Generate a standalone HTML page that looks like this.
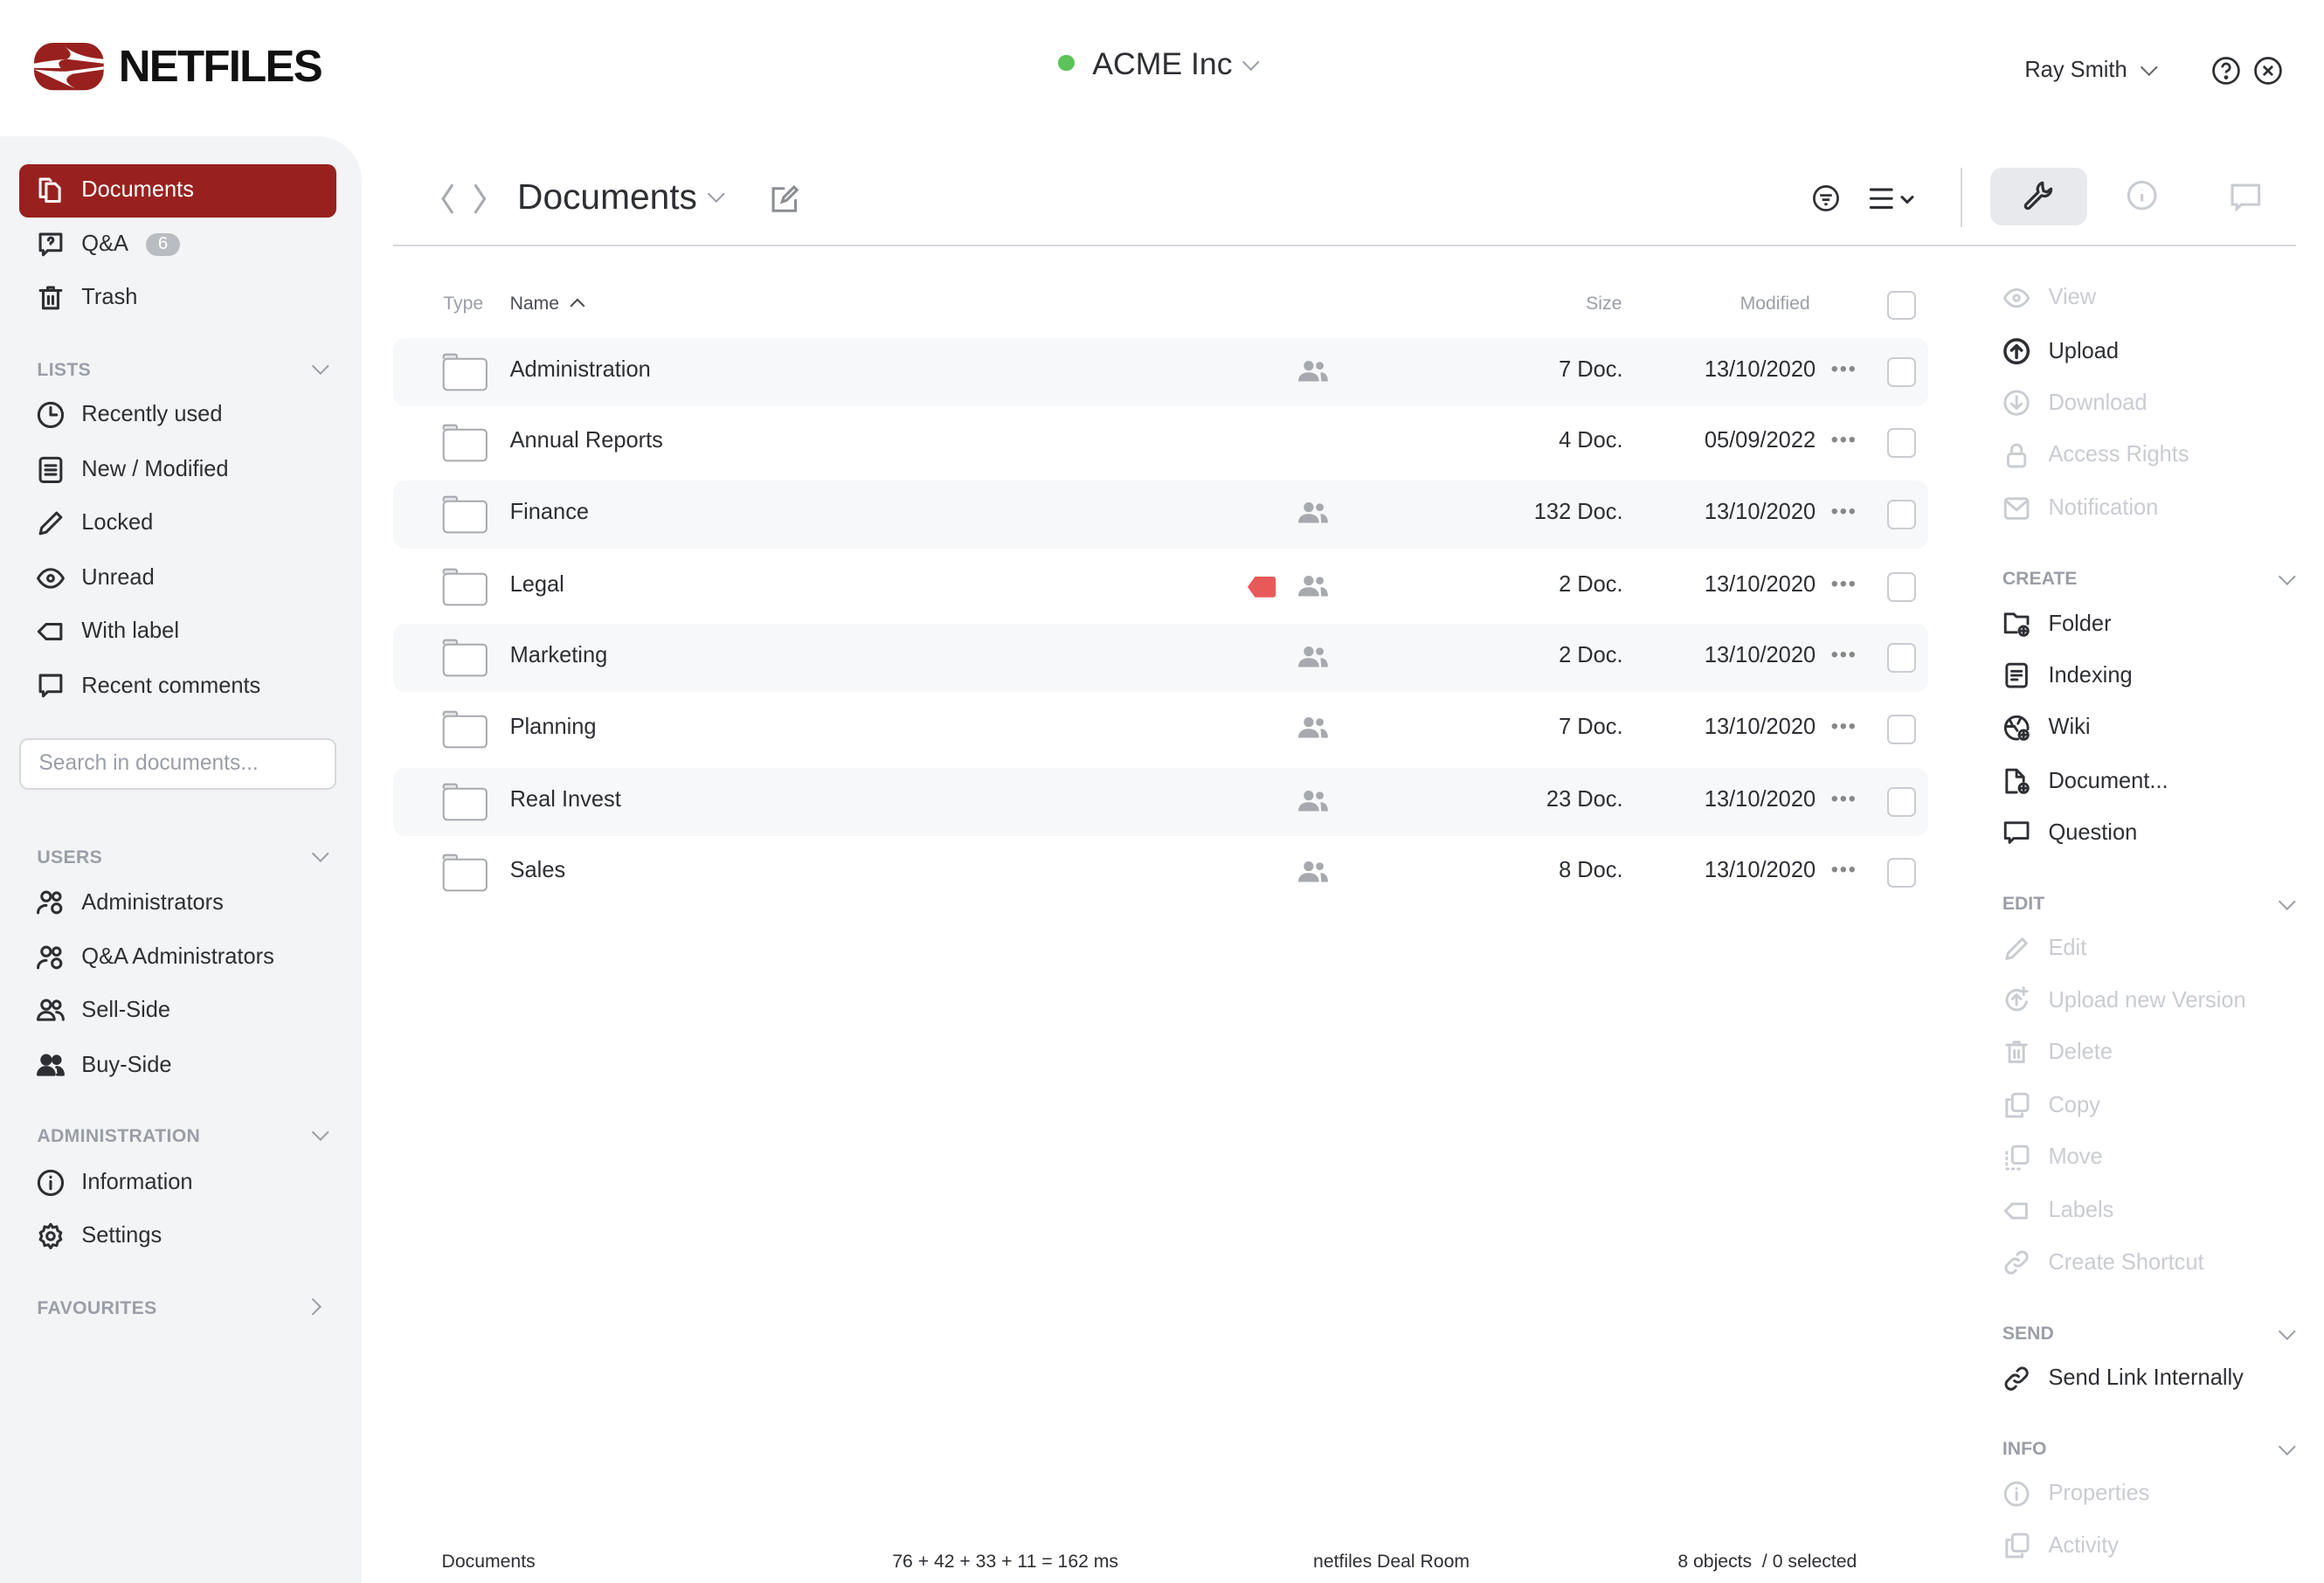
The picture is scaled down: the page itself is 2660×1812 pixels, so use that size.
<!DOCTYPE html>
<html><head><meta charset="utf-8"><style>
*{margin:0;padding:0;box-sizing:border-box}
html,body{width:2660px;height:1812px;overflow:hidden;background:#fff}
#r{zoom:1.69643;width:1568px;height:1068px;position:relative;font-family:"Liberation Sans",sans-serif;color:#2d2f33}
.a{position:absolute;white-space:nowrap}
.side{position:absolute;left:0;top:92px;width:244px;height:976px;background:#f3f4f6;border-top-right-radius:30px}
.si{position:absolute;left:24px;font-size:15px;display:flex;align-items:center;height:20px}
.si svg{width:20px;height:20px;margin-right:11px;fill:none;stroke:#2d2f33;stroke-width:1.8;stroke-linecap:round;stroke-linejoin:round}
.hd{position:absolute;left:25px;font-size:12.5px;color:#9a9ea6;font-weight:bold;letter-spacing:.2px}
.chev{position:absolute;width:8px;height:8px;border-right:1.5px solid #9a9ea6;border-bottom:1.5px solid #9a9ea6;transform:rotate(45deg)}
.row{position:absolute;left:265px;width:1036px;height:46px;border-radius:8px}
.row.g{background:#f7f8f9}
.fold{position:absolute;left:33px;top:10px;width:31px;height:26px}
.nm{position:absolute;left:79px;top:13px;font-size:15px}
.sz{position:absolute;right:206px;top:13px;font-size:15px}
.dt{position:absolute;right:76px;top:13px;font-size:15px}
.dots{position:absolute;right:48px;top:13px;font-size:14px;color:#888;letter-spacing:1px}
.cb{position:absolute;right:8px;top:13px;width:20px;height:20px;border:1.5px solid #c9ccd1;border-radius:4px;background:#fff}
.ppl{position:absolute;left:611px;top:14px}
.ri{position:absolute;left:1351px;font-size:15px;display:flex;align-items:center;height:20px}
.ri svg{width:19px;height:19px;margin-right:12px;fill:none;stroke-width:1.8;stroke-linecap:round;stroke-linejoin:round}
.ri.d{color:#c9ccd1}.ri.d svg{stroke:#c9ccd1}
.ri.k svg{stroke:#2d2f33}
.rh{position:absolute;left:1351px;font-size:12.5px;color:#9a9ea6;font-weight:bold}
.ft{position:absolute;top:1047px;font-size:12.5px}
</style></head><body><div id="r">
<!-- logo -->
<svg class="a" style="left:23px;top:29px" width="48" height="33" viewBox="0 0 48 33"><rect x="0" y="0" width="47" height="32" rx="13" fill="#98211f"/><path d="M0 17 L18 17 Q14 12 22 11 L47 14 L47 11 Q30 10 20 2 Q28 8 22 11 Q10 12 0 14Z" fill="#fff"/><path d="M0 18 L28 31 Q17 25 26 21 L47 18 L47 16 L24 19 Q20 20 0 18Z" fill="#fff"/></svg>
<div class="a" style="left:80px;top:27px;font-size:30px;font-weight:bold;letter-spacing:-1px;color:#111">NETFILES</div>
<div class="a" style="left:714px;top:37px;width:11px;height:11px;border-radius:50%;background:#5cc25a"></div>
<div class="a" style="left:737px;top:31px;font-size:21px">ACME Inc</div>
<div class="chev" style="left:840px;top:38px"></div>
<div class="a" style="left:1366px;top:39px;font-size:15px">Ray Smith</div>
<div class="chev" style="left:1446px;top:41px;border-color:#666"></div>
<svg class="a" style="left:1492px;top:38px" width="20" height="20" viewBox="0 0 20 20" fill="none" stroke="#2d2f33" stroke-width="1.6"><circle cx="10" cy="10" r="8.5"/><path d="M7.5 7.8a2.5 2.5 0 1 1 3.3 2.3c-.6.3-.8.7-.8 1.4"/><circle cx="10" cy="14.5" r=".6" fill="#2d2f33"/></svg>
<svg class="a" style="left:1520px;top:38px" width="20" height="20" viewBox="0 0 20 20" fill="none" stroke="#2d2f33" stroke-width="1.6"><circle cx="10" cy="10" r="8.5"/><path d="M7 7l6 6M13 7l-6 6"/></svg>

<div class="side"></div>
<div class="a" style="left:13px;top:111px;width:214px;height:36px;border-radius:6px;background:#98211f"></div>
<div class="si" style="top:118px;color:#fff"><svg viewBox="0 0 20 20" style="stroke:#fff"><path d="M6 15H3V3h6l1 1"/><path d="M7 6h6l3 3v9H7z"/></svg>Documents</div>
<div class="si" style="top:155px"><svg viewBox="0 0 20 20"><path d="M3 3h14v11H8l-3 3v-3H3z"/><path d="M8.5 7a1.6 1.6 0 1 1 2 1.5c-.4.2-.5.5-.5 1"/></svg>Q&amp;A<span style="margin-left:12px;background:#b9bcc1;color:#fff;font-size:12px;border-radius:9px;padding:1px 8px">6</span></div>
<div class="si" style="top:191px"><svg viewBox="0 0 20 20"><path d="M3 5h14M8 5V3h4v2M5 5v12h10V5M8.5 9v5M11.5 9v5"/></svg>Trash</div>
<div class="hd" style="top:243px">LISTS</div><div class="chev" style="left:212px;top:243px"></div>
<div class="si" style="top:270px"><svg viewBox="0 0 20 20"><circle cx="10" cy="10" r="8"/><path d="M10 5v5h4"/></svg>Recently used</div>
<div class="si" style="top:307px"><svg viewBox="0 0 20 20"><rect x="3" y="2" width="14" height="16" rx="2"/><path d="M6.5 7h7M6.5 10h7M6.5 13h7"/></svg>New / Modified</div>
<div class="si" style="top:343px"><svg viewBox="0 0 20 20"><path d="M3 17l1-4L14 3l3 3L7 16z"/></svg>Locked</div>
<div class="si" style="top:380px"><svg viewBox="0 0 20 20"><path d="M1.5 10s3-6 8.5-6 8.5 6 8.5 6-3 6-8.5 6-8.5-6-8.5-6z"/><circle cx="10" cy="10" r="2"/></svg>Unread</div>
<div class="si" style="top:416px"><svg viewBox="0 0 20 20"><path d="M7 5h10v10H7l-5-5z"/></svg>With label</div>
<div class="si" style="top:453px"><svg viewBox="0 0 20 20"><path d="M3 3h14v11H8l-3 3v-3H3z"/></svg>Recent comments</div>
<div class="a" style="left:13px;top:498px;width:214px;height:35px;border:1.5px solid #d6d8dc;border-radius:6px;background:#fff;font-size:14.5px;color:#9a9ea6;padding:8px 12px">Search in documents...</div>
<div class="hd" style="top:572px">USERS</div><div class="chev" style="left:212px;top:572px"></div>
<div class="si" style="top:599px"><svg viewBox="0 0 20 20"><circle cx="7" cy="6" r="3"/><path d="M1.5 17c0-3 2.5-5 5.5-5"/><circle cx="14" cy="6" r="2.5"/><circle cx="14" cy="14" r="3"/></svg>Administrators</div>
<div class="si" style="top:636px"><svg viewBox="0 0 20 20"><circle cx="7" cy="6" r="3"/><path d="M1.5 17c0-3 2.5-5 5.5-5"/><circle cx="14" cy="6" r="2.5"/><circle cx="14" cy="14" r="3"/></svg>Q&amp;A Administrators</div>
<div class="si" style="top:672px"><svg viewBox="0 0 20 20"><circle cx="7" cy="6" r="3"/><path d="M1.5 16c0-3 2.5-5 5.5-5s5.5 2 5.5 5z"/><circle cx="14" cy="6" r="2.5"/><path d="M14 11c2.5 0 4.5 2 4.5 5"/></svg>Sell-Side</div>
<div class="si" style="top:709px"><svg viewBox="0 0 20 20" style="fill:#2d2f33"><circle cx="7" cy="6" r="3"/><path d="M1.5 16c0-3 2.5-5 5.5-5s5.5 2 5.5 5z"/><circle cx="14" cy="6" r="2.5"/><path d="M14 11c2.5 0 4.5 2 4.5 5h-4"/></svg>Buy-Side</div>
<div class="hd" style="top:760px">ADMINISTRATION</div><div class="chev" style="left:212px;top:760px"></div>
<div class="si" style="top:788px"><svg viewBox="0 0 20 20"><circle cx="10" cy="10" r="8"/><path d="M10 9v5M10 6v.3"/></svg>Information</div>
<div class="si" style="top:824px"><svg viewBox="0 0 20 20"><circle cx="10" cy="10" r="2.5"/><path d="M10 2l1.5 2.2 2.6-.6.6 2.6L17 7.7l-1 2.3 1 2.3-2.3 1.5-.6 2.6-2.6-.6L10 18l-1.5-2.2-2.6.6-.6-2.6L3 12.3 4 10 3 7.7l2.3-1.5.6-2.6 2.6.6z"/></svg>Settings</div>
<div class="hd" style="top:876px">FAVOURITES</div><div class="chev" style="left:207px;top:878px;transform:rotate(-45deg)"></div>

<!-- main header -->
<svg class="a" style="left:296px;top:123px" width="40" height="22" viewBox="0 0 40 22" fill="none" stroke="#a6a9ae" stroke-width="1.8" stroke-linecap="round"><path d="M9 2L3 11l6 9M25 2l6 9-6 9"/></svg>
<div class="a" style="left:349px;top:119px;font-size:24px;color:#2d2f33">Documents</div>
<div class="chev" style="left:479px;top:127px"></div>
<svg class="a" style="left:519px;top:123px" width="22" height="22" viewBox="0 0 22 22" fill="none" stroke="#8a8d92" stroke-width="1.8" stroke-linecap="round"><path d="M10 4H3v15h15v-7"/><path d="M9 13l1-3 7-7 2 2-7 7z"/></svg>
<svg class="a" style="left:1222px;top:124px" width="20" height="20" viewBox="0 0 20 20" fill="none" stroke="#2d2f33" stroke-width="1.6"><circle cx="10" cy="10" r="8"/><path d="M6 8h8M7.5 11h5M9 14h2"/></svg>
<svg class="a" style="left:1260px;top:125px" width="34" height="18" viewBox="0 0 34 18" fill="none" stroke="#2d2f33" stroke-width="1.8" stroke-linecap="round"><path d="M2 3h14M2 9h14M2 15h14M23 8l3.5 3.5L30 8"/></svg>
<div class="a" style="left:1323px;top:113px;width:1px;height:40px;background:#d6d8dc"></div>
<div class="a" style="left:1343px;top:113px;width:65px;height:39px;border-radius:8px;background:#e8e9ec"></div>
<svg class="a" style="left:1364px;top:121px" width="22" height="22" viewBox="0 0 22 22" fill="none" stroke="#2d2f33" stroke-width="1.9" stroke-linecap="round" stroke-linejoin="round"><path d="M14 2.5a4.5 4.5 0 0 0-2.8 6.3L3 17a1.6 1.6 0 0 0 2.3 2.3l8.2-8.2a4.5 4.5 0 0 0 6.3-4.5l-2.7 2.1-2.3-.6-.6-2.3z"/></svg>
<svg class="a" style="left:1434px;top:121px" width="22" height="22" viewBox="0 0 22 22" fill="none" stroke="#c9ccd1" stroke-width="1.8"><circle cx="11" cy="11" r="9"/><path d="M11 10v5M11 7v.3"/></svg>
<svg class="a" style="left:1503px;top:122px" width="24" height="22" viewBox="0 0 24 22" fill="none" stroke="#c9ccd1" stroke-width="1.8"><path d="M3 3h18v13H9l-3 3v-3H3z"/></svg>
<div class="a" style="left:265px;top:165px;width:1284px;height:1.5px;background:#d6d8dc"></div>

<!-- table -->
<div class="a" style="left:299px;top:198px;font-size:12.5px;color:#9a9ea6">Type</div>
<div class="a" style="left:344px;top:198px;font-size:12.5px;color:#4a4d52">Name</div>
<div class="a" style="left:386px;top:203px;width:7px;height:7px;border-left:1.5px solid #4a4d52;border-top:1.5px solid #4a4d52;transform:rotate(45deg)"></div>
<div class="a" style="left:1070px;top:198px;font-size:12.5px;color:#9a9ea6">Size</div>
<div class="a" style="left:1174px;top:198px;font-size:12.5px;color:#9a9ea6">Modified</div>
<div class="a" style="left:1273px;top:196px;width:20px;height:20px;border:1.5px solid #c9ccd1;border-radius:4px"></div>

<div class="row g" style="top:228px"><svg class="fold" viewBox="0 0 31 26" fill="#fff" stroke="#a6a9ae" stroke-width="1.2"><path d="M1 4V2.5Q1 1 2.5 1h6Q10 1 10 2.5V4" fill="#e5e6e8"/><rect x="1" y="4" width="29" height="21" rx="2.5"/></svg><div class="nm">Administration</div><svg class="ppl" width="20" height="16" viewBox="0 0 20 16" fill="#a6a9ae"><circle cx="7" cy="4.5" r="3.3"/><path d="M0 15c0-4 3-6 7-6s7 2 7 6z"/><circle cx="14.5" cy="4.5" r="2.6"/><path d="M15 9c3 0 5 2 5 6h-4.5z"/></svg><div class="sz">7 Doc.</div><div class="dt">13/10/2020</div><div class="dots">•••</div><div class="cb"></div></div>
<div class="row" style="top:276px"><svg class="fold" viewBox="0 0 31 26" fill="#fff" stroke="#a6a9ae" stroke-width="1.2"><path d="M1 4V2.5Q1 1 2.5 1h6Q10 1 10 2.5V4" fill="#e5e6e8"/><rect x="1" y="4" width="29" height="21" rx="2.5"/></svg><div class="nm">Annual Reports</div><div class="sz">4 Doc.</div><div class="dt">05/09/2022</div><div class="dots">•••</div><div class="cb"></div></div>
<div class="row g" style="top:324px"><svg class="fold" viewBox="0 0 31 26" fill="#fff" stroke="#a6a9ae" stroke-width="1.2"><path d="M1 4V2.5Q1 1 2.5 1h6Q10 1 10 2.5V4" fill="#e5e6e8"/><rect x="1" y="4" width="29" height="21" rx="2.5"/></svg><div class="nm">Finance</div><svg class="ppl" width="20" height="16" viewBox="0 0 20 16" fill="#a6a9ae"><circle cx="7" cy="4.5" r="3.3"/><path d="M0 15c0-4 3-6 7-6s7 2 7 6z"/><circle cx="14.5" cy="4.5" r="2.6"/><path d="M15 9c3 0 5 2 5 6h-4.5z"/></svg><div class="sz">132 Doc.</div><div class="dt">13/10/2020</div><div class="dots">•••</div><div class="cb"></div></div>
<div class="row" style="top:373px"><svg class="fold" viewBox="0 0 31 26" fill="#fff" stroke="#a6a9ae" stroke-width="1.2"><path d="M1 4V2.5Q1 1 2.5 1h6Q10 1 10 2.5V4" fill="#e5e6e8"/><rect x="1" y="4" width="29" height="21" rx="2.5"/></svg><div class="nm">Legal</div><svg class="a" style="left:577px;top:16px" width="19" height="14" viewBox="0 0 19 14"><path d="M5 0h12q2 0 2 2v10q0 2-2 2H5L0 7z" fill="#e8595a"/></svg><svg class="ppl" width="20" height="16" viewBox="0 0 20 16" fill="#a6a9ae"><circle cx="7" cy="4.5" r="3.3"/><path d="M0 15c0-4 3-6 7-6s7 2 7 6z"/><circle cx="14.5" cy="4.5" r="2.6"/><path d="M15 9c3 0 5 2 5 6h-4.5z"/></svg><div class="sz">2 Doc.</div><div class="dt">13/10/2020</div><div class="dots">•••</div><div class="cb"></div></div>
<div class="row g" style="top:421px"><svg class="fold" viewBox="0 0 31 26" fill="#fff" stroke="#a6a9ae" stroke-width="1.2"><path d="M1 4V2.5Q1 1 2.5 1h6Q10 1 10 2.5V4" fill="#e5e6e8"/><rect x="1" y="4" width="29" height="21" rx="2.5"/></svg><div class="nm">Marketing</div><svg class="ppl" width="20" height="16" viewBox="0 0 20 16" fill="#a6a9ae"><circle cx="7" cy="4.5" r="3.3"/><path d="M0 15c0-4 3-6 7-6s7 2 7 6z"/><circle cx="14.5" cy="4.5" r="2.6"/><path d="M15 9c3 0 5 2 5 6h-4.5z"/></svg><div class="sz">2 Doc.</div><div class="dt">13/10/2020</div><div class="dots">•••</div><div class="cb"></div></div>
<div class="row" style="top:469px"><svg class="fold" viewBox="0 0 31 26" fill="#fff" stroke="#a6a9ae" stroke-width="1.2"><path d="M1 4V2.5Q1 1 2.5 1h6Q10 1 10 2.5V4" fill="#e5e6e8"/><rect x="1" y="4" width="29" height="21" rx="2.5"/></svg><div class="nm">Planning</div><svg class="ppl" width="20" height="16" viewBox="0 0 20 16" fill="#a6a9ae"><circle cx="7" cy="4.5" r="3.3"/><path d="M0 15c0-4 3-6 7-6s7 2 7 6z"/><circle cx="14.5" cy="4.5" r="2.6"/><path d="M15 9c3 0 5 2 5 6h-4.5z"/></svg><div class="sz">7 Doc.</div><div class="dt">13/10/2020</div><div class="dots">•••</div><div class="cb"></div></div>
<div class="row g" style="top:518px"><svg class="fold" viewBox="0 0 31 26" fill="#fff" stroke="#a6a9ae" stroke-width="1.2"><path d="M1 4V2.5Q1 1 2.5 1h6Q10 1 10 2.5V4" fill="#e5e6e8"/><rect x="1" y="4" width="29" height="21" rx="2.5"/></svg><div class="nm">Real Invest</div><svg class="ppl" width="20" height="16" viewBox="0 0 20 16" fill="#a6a9ae"><circle cx="7" cy="4.5" r="3.3"/><path d="M0 15c0-4 3-6 7-6s7 2 7 6z"/><circle cx="14.5" cy="4.5" r="2.6"/><path d="M15 9c3 0 5 2 5 6h-4.5z"/></svg><div class="sz">23 Doc.</div><div class="dt">13/10/2020</div><div class="dots">•••</div><div class="cb"></div></div>
<div class="row" style="top:566px"><svg class="fold" viewBox="0 0 31 26" fill="#fff" stroke="#a6a9ae" stroke-width="1.2"><path d="M1 4V2.5Q1 1 2.5 1h6Q10 1 10 2.5V4" fill="#e5e6e8"/><rect x="1" y="4" width="29" height="21" rx="2.5"/></svg><div class="nm">Sales</div><svg class="ppl" width="20" height="16" viewBox="0 0 20 16" fill="#a6a9ae"><circle cx="7" cy="4.5" r="3.3"/><path d="M0 15c0-4 3-6 7-6s7 2 7 6z"/><circle cx="14.5" cy="4.5" r="2.6"/><path d="M15 9c3 0 5 2 5 6h-4.5z"/></svg><div class="sz">8 Doc.</div><div class="dt">13/10/2020</div><div class="dots">•••</div><div class="cb"></div></div>

<!-- footer -->
<div class="ft" style="left:298px">Documents</div>
<div class="ft" style="left:602px">76 + 42 + 33 + 11 = 162 ms</div>
<div class="ft" style="left:886px">netfiles Deal Room</div>
<div class="ft" style="left:1132px">8 objects &nbsp;/ 0 selected</div>

<!-- right panel -->
<div class="ri d" style="top:191px"><svg viewBox="0 0 20 20"><path d="M1.5 10s3-6 8.5-6 8.5 6 8.5 6-3 6-8.5 6-8.5-6-8.5-6z"/><circle cx="10" cy="10" r="2"/></svg>View</div>
<div class="ri k" style="top:227px"><svg viewBox="0 0 20 20" style="stroke-width:2.2"><circle cx="10" cy="10" r="8.2"/><path d="M10 14.5V6M6.5 9.3L10 6l3.5 3.3"/></svg>Upload</div>
<div class="ri d" style="top:262px"><svg viewBox="0 0 20 20"><circle cx="10" cy="10" r="8.2"/><path d="M10 5.5V14M6.5 10.7L10 14l3.5-3.3"/></svg>Download</div>
<div class="ri d" style="top:297px"><svg viewBox="0 0 20 20"><rect x="4" y="9" width="12" height="9" rx="2"/><path d="M6.5 9V6a3.5 3.5 0 0 1 7 0v3"/></svg>Access Rights</div>
<div class="ri d" style="top:333px"><svg viewBox="0 0 20 20"><rect x="2" y="3" width="16" height="14" rx="2"/><path d="M2.5 4.5L10 11l7.5-6.5"/></svg>Notification</div>
<div class="rh" style="top:384px">CREATE</div><div class="chev" style="left:1539px;top:385px"></div>
<div class="ri k" style="top:411px"><svg viewBox="0 0 20 20"><path d="M10 16H2V3h6l2 2h8v5"/><circle cx="15" cy="15" r="3.2"/><path d="M15 13.5v3M13.5 15h3"/></svg>Folder</div>
<div class="ri k" style="top:446px"><svg viewBox="0 0 20 20"><rect x="3" y="2" width="14" height="16" rx="2"/><path d="M6.5 7h7M6.5 10h7M6.5 13h4"/></svg>Indexing</div>
<div class="ri k" style="top:481px"><svg viewBox="0 0 20 20"><path d="M11 18a8 8 0 1 1 7-7"/><path d="M2.5 9h6l2 3M5 4l2 4M13 3l-2 4"/><circle cx="15" cy="15" r="3.2"/><path d="M15 13.5v3M13.5 15h3"/></svg>Wiki</div>
<div class="ri k" style="top:517px"><svg viewBox="0 0 20 20"><path d="M10 18H3V2h7l5 5v3M10 2v5h5"/><circle cx="15" cy="15" r="3.2"/><path d="M15 13.5v3M13.5 15h3"/></svg>Document...</div>
<div class="ri k" style="top:552px"><svg viewBox="0 0 20 20"><path d="M2 3h16v11H8l-3 3v-3H2z"/></svg>Question</div>
<div class="rh" style="top:603px">EDIT</div><div class="chev" style="left:1539px;top:604px"></div>
<div class="ri d" style="top:630px"><svg viewBox="0 0 20 20"><path d="M3 17l1-4L14 3l3 3L7 16z"/></svg>Edit</div>
<div class="ri d" style="top:665px"><svg viewBox="0 0 20 20"><path d="M17 11a7 7 0 1 1-5-8"/><path d="M10 13V6M7 9l3-3 3 3M15 1v5M12.5 3.5h5"/></svg>Upload new Version</div>
<div class="ri d" style="top:700px"><svg viewBox="0 0 20 20"><path d="M3 5h14M8 5V3h4v2M5 5v12h10V5M8.5 9v5M11.5 9v5"/></svg>Delete</div>
<div class="ri d" style="top:736px"><svg viewBox="0 0 20 20"><rect x="7" y="2" width="11" height="12" rx="2"/><path d="M5 6H3v12h11v-2"/></svg>Copy</div>
<div class="ri d" style="top:771px"><svg viewBox="0 0 20 20"><rect x="7" y="2" width="11" height="12" rx="2"/><path d="M3 6v1M3 10v1M3 14v1M3 18h1M7 18h1M11 18h1" /></svg>Move</div>
<div class="ri d" style="top:807px"><svg viewBox="0 0 20 20"><path d="M7 5h10v10H7l-5-5z"/></svg>Labels</div>
<div class="ri d" style="top:842px"><svg viewBox="0 0 20 20"><path d="M8.5 11.5a3.5 3.5 0 0 0 5 0l3-3a3.5 3.5 0 0 0-5-5l-1 1M11.5 8.5a3.5 3.5 0 0 0-5 0l-3 3a3.5 3.5 0 0 0 5 5l1-1"/></svg>Create Shortcut</div>
<div class="rh" style="top:893px">SEND</div><div class="chev" style="left:1539px;top:894px"></div>
<div class="ri k" style="top:920px"><svg viewBox="0 0 20 20"><path d="M8.5 11.5a3.5 3.5 0 0 0 5 0l3-3a3.5 3.5 0 0 0-5-5l-1 1M11.5 8.5a3.5 3.5 0 0 0-5 0l-3 3a3.5 3.5 0 0 0 5 5l1-1"/></svg>Send Link Internally</div>
<div class="rh" style="top:971px">INFO</div><div class="chev" style="left:1539px;top:972px"></div>
<div class="ri d" style="top:998px"><svg viewBox="0 0 20 20"><circle cx="10" cy="10" r="8"/><path d="M10 9v5M10 6v.3"/></svg>Properties</div>
<div class="ri d" style="top:1033px"><svg viewBox="0 0 20 20"><rect x="7" y="2" width="11" height="12" rx="2"/><path d="M5 6H3v12h11v-2"/></svg>Activity</div>
</div></body></html>
